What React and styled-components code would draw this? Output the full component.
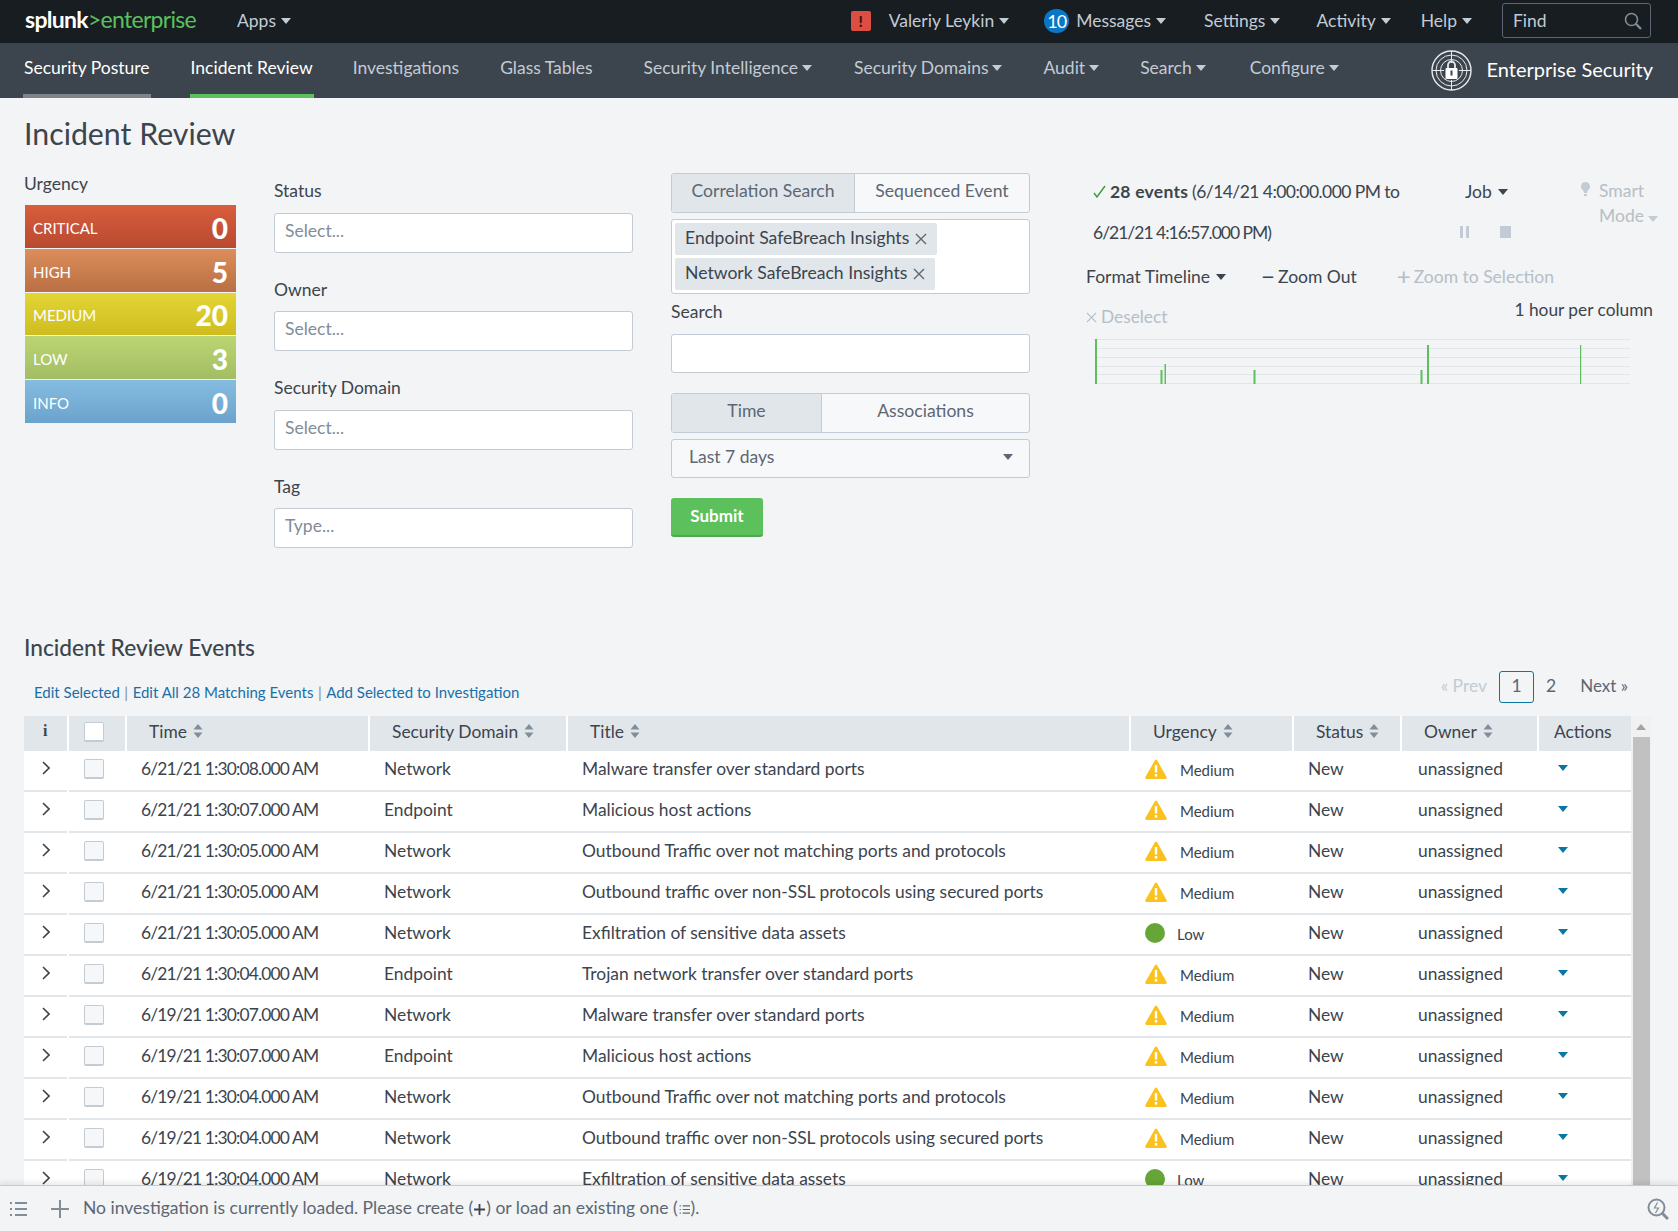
import React from "react";
import styled, { createGlobalStyle } from "styled-components";

const Global = createGlobalStyle`
  html, body { margin: 0; padding: 0; background: #f2f4f5; }
  body { font-family: Lato, "Open Sans", "Liberation Sans", sans-serif; color: #3c444d; }
  * { box-sizing: border-box; }
`;

const Shell = styled.div`
  width: 1678px; height: 1231px; display: flex; flex-direction: column; overflow: hidden; background: #f2f4f5;
`;
const TopBar = styled.header`
  flex: none; height: 43px; background: #171d21; display: flex; align-items: center; padding: 0 25px 2px; color: #c3cbd4; font-size: 17.5px;
`;
const Logo = styled.div`
  font-size: 23px; line-height: 1; letter-spacing: -0.7px; color: #5cc05c; width: 212px; margin-top: -3px; white-space: nowrap;
  b { color: #fff; font-weight: 700; }
`;
const TopItem = styled.span`
  display: inline-flex; align-items: center; gap: 5px; margin-left: ${p => p.$ml || 0}px; white-space: nowrap;
`;
const Spacer = styled.div`flex: 1;`;
const Caret = styled.i`
  display: inline-block; flex: none; width: 0; height: 0; margin-top: 1px;
  border-left: ${p => p.$s || 5}px solid transparent; border-right: ${p => p.$s || 5}px solid transparent;
  border-top: ${p => (p.$s || 5) + 1}px solid ${p => p.$c || "currentColor"};
`;
const AlertBox = styled.span`
  width: 20px; height: 20px; border-radius: 2px; background: #dc4e41; color: #3c1410; font-weight: 900; font-size: 15px;
  display: flex; align-items: center; justify-content: center; margin-right: 18px;
`;
const Badge = styled.span`
  width: 25px; height: 24px; border-radius: 12px; background: #0877c6; color: #fff; font-size: 18px;
  display: flex; align-items: center; justify-content: center; margin-right: 2px; letter-spacing: -1px;
`;
const FindBox = styled.div`
  width: 149px; height: 35px; margin-left: 30px; margin-right: 2px; border: 1px solid #5c6773; border-radius: 3px; display: flex; align-items: center;
  justify-content: space-between; padding: 0 8px 0 10px; color: #c3cbd4;
`;
const NavBar = styled.nav`
  flex: none; height: 55px; background: #3c444d; display: flex; padding-left: 23px; padding-right: 24px; font-size: 17.5px; color: #c3cbd4;
`;
const NavItem = styled.a`
  height: 55px; padding: 0 1px 3px; margin-right: ${p => p.$mr}px; display: flex; align-items: center; gap: 4px; white-space: nowrap;
  color: ${p => (p.$on ? "#fff" : "#c3cbd4")};
  border-bottom: 4px solid ${p => p.$line || "transparent"};
`;
const Brand = styled.div`
  margin-left: auto; display: flex; align-items: center; gap: 15px; color: #fff; font-size: 20px; padding-bottom: 1px; margin-right: 1px; white-space: nowrap;
`;
const BrandName = styled.span`margin-top: -3px;`;
const Main = styled.main`
  flex: 1; min-height: 0; overflow: hidden; padding: 0 24px;
`;
const PageTitle = styled.h1`
  margin: 0; padding-top: 16px; height: 75px; font-size: 30.3px; line-height: 38px; font-weight: 400; color: #3c444d;
`;
const Filters = styled.section`
  display: grid; grid-template-columns: 212px 359px 359px minmax(0, 1fr); column-gap: 38px; height: 377px;
`;
const UrgencyCol = styled.div``;
const UrgencyLabel = styled.div`
  font-size: 17.5px; line-height: 22px; margin-bottom: 10px;
`;
const Bars = styled.div`
  margin-left: 1px; display: flex; flex-direction: column; gap: 1px;
`;
const Bar = styled.div`
  height: 42.8px; padding: 3px 8px 0; display: flex; align-items: center; justify-content: space-between; color: #fff; font-size: 15px;
  background: linear-gradient(${p => p.$a}, ${p => p.$b});
  b { font-size: 28px; font-weight: 900; line-height: 1; }
`;
const FieldCol = styled.div`
  padding-top: 7px; display: flex; flex-direction: column; gap: 26px;
`;
const Field = styled.div``;
const Label = styled.div`
  font-size: 17.5px; line-height: 22px; margin-bottom: 10.5px; color: #3c444d;
`;
const Input = styled.div`
  height: ${p => p.$h || 40}px; background: #fff; border: 1px solid #c3cbd4; border-radius: 3px; padding: 0 10px; line-height: 34px; font-size: 17.5px; color: #818d99;
`;
const MiddleCol = styled.div`
  display: flex; flex-direction: column;
`;
const Tabs = styled.div`
  height: 40px; display: grid; grid-template-columns: ${p => p.$cols}; border: 1px solid #c3cbd4; border-radius: 3px; overflow: hidden; background: #f7f8fa;
`;
const Tab = styled.div`
  display: flex; align-items: center; justify-content: center; font-size: 17.6px; padding-bottom: 5px; color: #5c6773;
  background: ${p => (p.$on ? "#e1e6eb" : "transparent")};
  border-right: ${p => (p.$on ? "1px solid #c3cbd4" : "0")};
`;
const Multi = styled.div`
  margin-top: 6px; background: #fff; border: 1px solid #c3cbd4; border-radius: 3px; padding: 3px; display: flex; flex-direction: column; align-items: flex-start; gap: 3px;
`;
const Chip = styled.span`
  height: 32px; background: #e1e6eb; border-radius: 2px; padding: 0 10px 3px; display: inline-flex; align-items: center; gap: 6px; font-size: 17.6px; color: #3c444d;
  svg { margin-top: 3px; }
`;
const SearchLabel = styled(Label)`
  margin: 7px 0 11px;
`;
const SmallGap = styled.div`height: 20px; flex: none;`;
const Dropdown = styled.div`
  margin-top: 6px; height: 39px; background: #f7f8fa; border: 1px solid #c3cbd4; border-radius: 3px; display: flex; align-items: center; justify-content: space-between;
  padding: 0 16px 5px 17px; font-size: 17.5px; color: #5c6773;
`;
const Submit = styled.button`
  margin-top: 20px; width: 92px; height: 39px; border: 0; border-bottom: 2px solid #4ea94e; border-radius: 3px; background: #5cc05c; color: #fff; font: 700 17px Lato, sans-serif; padding: 0 0 3px;
`;
const RightCol = styled.div`
  margin-left: 19px; margin-top: -1px; min-width: 0;
`;
const JobGrid = styled.div`
  display: grid; grid-template-columns: 378px 117px minmax(0, 1fr); grid-template-rows: 40px 40px; font-size: 17.5px; align-items: center;
`;
const JobText = styled.div`
  padding: 0 0 ${p => p.$pb || 0}px 6px; white-space: nowrap; letter-spacing: ${p => p.$ls}px;
  b { font-weight: 700; letter-spacing: 0.25px; }
`;
const JobMenu = styled.div`
  display: flex; align-items: center; gap: 6px; padding-bottom: 2px;
`;
const SmartMode = styled.div`
  grid-column: 3; grid-row: 1 / span 2; align-self: start; padding-top: 6px; line-height: 25px; color: #b6bec7; position: relative; padding-left: 18px; white-space: nowrap;
  margin-left: -1px;
  svg { position: absolute; left: 0; top: 10px; }
`;
const JobIcons = styled.div`
  display: flex; align-items: center; gap: 31px; margin-left: -5px;
`;
const Pause = styled.span`
  width: 9px; height: 12px; border-left: 3px solid #c3cbd4; border-right: 3px solid #c3cbd4;
`;
const Stop = styled.span`
  width: 11px; height: 12px; background: #c3cbd4;
`;
const Tools = styled.div`
  margin-top: 12px; height: 24px; display: flex; align-items: center; font-size: 17.5px; white-space: nowrap;
`;
const Tool = styled.span`
  display: inline-flex; align-items: center; gap: 3px; margin-left: ${p => p.$ml || 0}px; color: ${p => (p.$off ? "#b6bec7" : "#3c444d")};
`;
const FormatTool = styled(Tool)`
  gap: 6px; margin-left: -1px;
`;
const Sym = styled.span`font-size: 24px; line-height: 20px; font-weight: 400;`;
const DeselectRow = styled.div`
  margin-top: 11px; height: 29px; padding-right: 1px; display: flex; justify-content: space-between; font-size: 17.3px; line-height: 22px;
`;
const Deselect = styled.span`
  display: inline-flex; align-items: center; gap: 4px; height: 22px; margin: 7px 0 0 -1px; color: #b6bec7;
`;
const Chart = styled.svg`
  display: block; margin: 11px 0 0 7px;
`;
const EventsTitle = styled.h2`
  margin: 83px 0 8px; font-size: 22.7px; line-height: 30px; font-weight: 500; color: #3c444d;
`;
const ActionRow = styled.div`
  height: 32px; margin-bottom: 13px; display: flex; justify-content: space-between;
`;
const Links = styled.div`
  padding: 11px 0 0 10px; font-size: 15px; line-height: 20px; color: #1a6fa8;
  span { color: #818d99; margin: 0 4.5px; }
`;
const Pager = styled.div`
  display: flex; align-items: center; font-size: 17.5px; margin-right: 26px; padding-bottom: 3px; color: #5c6773;
`;
const PrevLink = styled.span`color: #c3cbd4; margin-right: 12px;`;
const PageBox = styled.span`
  width: 35px; height: 32px; margin-bottom: -3px; padding-bottom: 3px; border: 1px solid #0877a6; border-radius: 3px; display: flex; align-items: center; justify-content: center; margin-right: 12px;
`;
const PageNum = styled.span`margin-right: 24px;`;
const NextLink = styled.span`font-size: 17px;`;
const TableWrap = styled.div`
  display: flex; align-items: flex-start;
`;
const Table = styled.div`
  width: 1607px; flex: none; background: #fff; font-size: 17.4px;
`;
const cols = "45px 58px 243px 198px 563px 163px 108px 137px 92px";
const HeadRow = styled.div`
  display: grid; grid-template-columns: ${cols}; height: 35px; background: #e1e6eb;
`;
const HeadCell = styled.div`
  display: flex; align-items: center; gap: 6px; padding-left: ${p => p.$pl || 22}px; border-right: 2px solid #fff; padding-bottom: 5px; color: #3c444d;
  &:last-child { border-right: 0; padding-left: 15px; }
`;
const HeadCheckCell = styled(HeadCell)`
  padding-bottom: 3px;
`;
const InfoI = styled.span`
  font: 700 16px "Liberation Serif", serif; margin-left: 0;
`;
const Row = styled.div`
  display: grid; grid-template-columns: ${cols}; height: 41px; align-items: stretch;
`;
const Cell = styled.div`
  border-bottom: 2px solid #e1e6eb; padding: 6px 0 0 ${p => p.$pl || 15}px; line-height: 24px; white-space: nowrap; color: #3c444d;
`;
const TimeCell = styled(Cell)`
  letter-spacing: -0.85px;
`;
const ExpandCell = styled(Cell)`
  margin-right: 2px; padding: 10px 0 0 18px; line-height: 14px;
`;
const Check = styled.span`
  display: block; width: 20px; height: 20px; background: ${p => p.$white ? "#fff" : "#f5f7f8"}; border: 1px solid #c3cbd4; border-bottom-width: 2px; border-radius: 2px; margin-top: ${p => p.$mt || 0}px;
`;
const CheckCell = styled(Cell)`
  padding: 2px 0 0 15px;
`;
const UrgencyCell = styled(Cell)`
  display: flex; align-items: flex-start; padding: 8px 0 0 14px;
`;
const UrgencyText = styled.span`
  font-size: 15px; line-height: 20px; margin: 1px 0 0 ${p => p.$ml}px;
`;
const Dot = styled.span`
  width: 20px; height: 20px; border-radius: 50%; background: #65a637;
`;
const ActionCell = styled(Cell)`
  display: flex; align-items: flex-start; padding: 13px 0 0 19px;
`;
const Track = styled.div`
  width: 20px; height: 500px; background: #f1f1f1; margin-top: 0; position: relative; padding: 21px 1px 0 2px;
`;
const TrackUp = styled.i`
  position: absolute; left: 5px; top: 8px; width: 0; height: 0; border-left: 5px solid transparent; border-right: 5px solid transparent; border-bottom: 6px solid #a3a3a3;
`;
const Thumb = styled.div`height: 479px; background: #c1c1c1;`;
const Footer = styled.footer`
  flex: none; height: 46px; background: #f2f4f5; border-top: 1px solid #c3cbd4; box-shadow: 0 -3px 5px rgba(0,0,0,0.08); position: relative; z-index: 2;
  display: flex; align-items: center; padding: 0 9px; font-size: 17.5px; color: #5c6773; white-space: nowrap;
`;
const FootText = styled.span`margin-left: 14px; margin-top: -2px;`;
const FootIcons = styled.span`display: flex; align-items: center; gap: 24px;`;
const FootEnd = styled.span`margin-left: auto; display: flex;`;

const ListIcon = ({ size = 18, c = "#818d99", sw = 2 }) => (
  <svg width={size} height={size} viewBox="0 0 18 18" stroke={c} strokeWidth={sw} fill="none">
    <path d="M1 3h2M6 3h12M1 9h2M6 9h12M1 15h2M6 15h12" />
  </svg>
);
const Chevron = () => (
  <svg width="8" height="14" viewBox="0 0 8 14" fill="none" stroke="#3c444d" strokeWidth="1.6">
    <path d="M1 1l6 6-6 6" />
  </svg>
);
const Sort = () => (
  <svg width="10" height="14" viewBox="0 0 10 14" fill="#818d99"><path d="M5 0l4.5 5.5h-9zM5 14l4.5-5.5h-9z" /></svg>
);
const Warn = () => (
  <svg width="22" height="20" viewBox="0 0 22 20">
    <path d="M11 .5a1.2 1.2 0 0 1 1 .6l9.6 17a1.2 1.2 0 0 1-1 1.8H1.4a1.2 1.2 0 0 1-1-1.8L10 1.1a1.2 1.2 0 0 1 1-.6z" fill="#fbc21e" />
    <rect x="9.8" y="6" width="2.4" height="7.5" fill="#fff" />
    <rect x="9.8" y="15" width="2.4" height="2.6" fill="#fff" />
  </svg>
);
const SearchIcon = ({ c = "#818d99" }) => (
  <svg width="18" height="18" viewBox="0 0 18 18" fill="none" stroke={c} strokeWidth="1.6">
    <circle cx="7.5" cy="7.5" r="6" /><path d="M12 12l5 5" strokeWidth="2.4" />
  </svg>
);
const LockLogo = () => (
  <svg width="41" height="41" viewBox="0 0 41 41" fill="none" stroke="#e8ebee">
    <circle cx="20.5" cy="20.5" r="19.5" strokeWidth="1.4" />
    <circle cx="20.5" cy="20.5" r="15.5" strokeWidth="1" />
    <circle cx="20.5" cy="20.5" r="11" strokeWidth="1" />
    <path d="M20.5 1v12M20.5 30v10M1 20.5h12M28 20.5h12" strokeWidth="1" />
    <path d="M17 18v-3a3.5 3.5 0 0 1 7 0v3" strokeWidth="1.8" />
    <rect x="14.5" y="18" width="12" height="11" rx="1" fill="#fff" stroke="none" />
    <rect x="19.5" y="20.5" width="2" height="5" fill="#3c444d" stroke="none" />
  </svg>
);
const Bulb = () => (
  <svg width="9" height="14" viewBox="0 0 9 14" fill="#c3cbd4"><path d="M4.5 0a4.5 4.5 0 0 1 2.2 8.4L6 11H3l-.7-2.6A4.5 4.5 0 0 1 4.5 0zM3 12h3v2H3z" /></svg>
);
const XMark = ({ size = 12, c = "#5c6773" }) => (
  <svg width={size} height={size} viewBox="0 0 12 12" stroke={c} strokeWidth="1.4" fill="none"><path d="M1 1l10 10M11 1L1 11" /></svg>
);
const Check2 = () => (
  <svg width="13" height="13" viewBox="0 0 13 13" stroke="#3c9a3c" strokeWidth="1.4" fill="none"><path d="M1 8l3 4 8-11" /></svg>
);
const Plus = () => (
  <svg width="18" height="18" viewBox="0 0 18 18" stroke="#818d99" strokeWidth="2" fill="none"><path d="M9 0v18M0 9h18" /></svg>
);
const InvestIcon = () => (
  <svg width="22" height="22" viewBox="0 0 22 22" fill="none" stroke="#818d99">
    <circle cx="9.5" cy="9.5" r="8" strokeWidth="2" />
    <path d="M15 15l6 6" strokeWidth="3" />
    <path d="M10.5 4.5L7.5 10h4l-3 5" strokeWidth="1.2" />
  </svg>
);
const InlinePlus = () => (
  <svg width="11" height="11" viewBox="0 0 11 11" stroke="#3c444d" strokeWidth="1.8" fill="none" style={{ verticalAlign: "-1px", margin: "0 1px" }}><path d="M5.5 0v11M0 5.5h11" /></svg>
);
const InlineList = () => (
  <svg width="11" height="11" viewBox="0 0 18 18" stroke="#5c6773" strokeWidth="2" fill="none" style={{ verticalAlign: "-1px", margin: "0 1px" }}><path d="M1 3h2M6 3h12M1 9h2M6 9h12M1 15h2M6 15h12" /></svg>
);

const navItems = [
  { t: "Security Posture", mr: 39, on: true, line: "#7d8388" },
  { t: "Incident Review", mr: 38, on: true, line: "#5cc05c" },
  { t: "Investigations", mr: 39 },
  { t: "Glass Tables", mr: 49 },
  { t: "Security Intelligence", caret: true, mr: 40 },
  { t: "Security Domains", caret: true, mr: 39 },
  { t: "Audit", caret: true, mr: 39 },
  { t: "Search", caret: true, mr: 42 },
  { t: "Configure", caret: true, mr: 0 },
];
const urgencies = [
  ["CRITICAL", "0", "#d85d3c", "#b84a31"],
  ["HIGH", "5", "#dc8e5b", "#b96f43"],
  ["MEDIUM", "20", "#e3d535", "#cfbd1f"],
  ["LOW", "3", "#bcd572", "#a3bd64"],
  ["INFO", "0", "#85bce0", "#6ba3cc"],
];
const M = "Medium", L = "Low";
const rows = [
  ["6/21/21 1:30:08.000 AM", "Network", "Malware transfer over standard ports", M],
  ["6/21/21 1:30:07.000 AM", "Endpoint", "Malicious host actions", M],
  ["6/21/21 1:30:05.000 AM", "Network", "Outbound Traffic over not matching ports and protocols", M],
  ["6/21/21 1:30:05.000 AM", "Network", "Outbound traffic over non-SSL protocols using secured ports", M],
  ["6/21/21 1:30:05.000 AM", "Network", "Exfiltration of sensitive data assets", L],
  ["6/21/21 1:30:04.000 AM", "Endpoint", "Trojan network transfer over standard ports", M],
  ["6/19/21 1:30:07.000 AM", "Network", "Malware transfer over standard ports", M],
  ["6/19/21 1:30:07.000 AM", "Endpoint", "Malicious host actions", M],
  ["6/19/21 1:30:04.000 AM", "Network", "Outbound Traffic over not matching ports and protocols", M],
  ["6/19/21 1:30:04.000 AM", "Network", "Outbound traffic over non-SSL protocols using secured ports", M],
  ["6/19/21 1:30:04.000 AM", "Network", "Exfiltration of sensitive data assets", L],
];
const heads = ["Time", "Security Domain", "Title", "Urgency", "Status", "Owner"];
const grid = [0, 9, 18, 27, 35, 44];
const bars = [
  [1095, 2, 0], [1160.5, 2, 31], [1164.5, 1.5, 25], [1253.5, 2, 31], [1420.5, 2, 31], [1427, 2, 6], [1580, 1.2, 6],
];

export default function App() {
  return (
    <Shell>
      <Global />
      <TopBar>
        <Logo><b>splunk</b>&gt;enterprise</Logo>
        <TopItem>Apps <Caret /></TopItem>
        <Spacer />
        <AlertBox>!</AlertBox>
        <TopItem>Valeriy Leykin <Caret /></TopItem>
        <TopItem $ml={35}><Badge>10</Badge>Messages <Caret /></TopItem>
        <TopItem $ml={38}>Settings <Caret /></TopItem>
        <TopItem $ml={36}>Activity <Caret /></TopItem>
        <TopItem $ml={30}>Help <Caret /></TopItem>
        <FindBox>Find <SearchIcon /></FindBox>
      </TopBar>
      <NavBar>
        {navItems.map(n => (
          <NavItem key={n.t} $mr={n.mr} $on={n.on} $line={n.line}>{n.t}{n.caret && <Caret />}</NavItem>
        ))}
        <Brand><LockLogo /><BrandName>Enterprise Security</BrandName></Brand>
      </NavBar>
      <Main>
        <PageTitle>Incident Review</PageTitle>
        <Filters>
          <UrgencyCol>
            <UrgencyLabel>Urgency</UrgencyLabel>
            <Bars>
              {urgencies.map(([t, n, a, b]) => (
                <Bar key={t} $a={a} $b={b}><span>{t}</span><b>{n}</b></Bar>
              ))}
            </Bars>
          </UrgencyCol>
          <FieldCol>
            <Field><Label>Status</Label><Input>Select...</Input></Field>
            <Field><Label>Owner</Label><Input>Select...</Input></Field>
            <Field><Label>Security Domain</Label><Input>Select...</Input></Field>
            <Field><Label>Tag</Label><Input>Type...</Input></Field>
          </FieldCol>
          <MiddleCol>
            <Tabs $cols="183px 1fr"><Tab $on>Correlation Search</Tab><Tab>Sequenced Event</Tab></Tabs>
            <Multi>
              <Chip>Endpoint SafeBreach Insights <XMark /></Chip>
              <Chip>Network SafeBreach Insights <XMark /></Chip>
            </Multi>
            <SearchLabel>Search</SearchLabel>
            <Input $h={39} />
            <SmallGap />
            <Tabs $cols="150px 1fr"><Tab $on>Time</Tab><Tab>Associations</Tab></Tabs>
            <Dropdown>Last 7 days <Caret $c="#5c6773" /></Dropdown>
            <Submit>Submit</Submit>
          </MiddleCol>
          <RightCol>
            <JobGrid>
              <JobText $ls={-0.55} $pb={2}><Check2 /> <b>28 events</b> (6/14/21 4:00:00.000 PM to</JobText>
              <JobMenu>Job <Caret /></JobMenu>
              <SmartMode><Bulb />Smart<br />Mode <Caret $c="#c3cbd4" /></SmartMode>
              <JobText $ls={-1}>6/21/21 4:16:57.000 PM)</JobText>
              <JobIcons><Pause /><Stop /></JobIcons>
            </JobGrid>
            <Tools>
              <FormatTool>Format Timeline <Caret /></FormatTool>
              <Tool $ml={35}><Sym>−</Sym>Zoom Out</Tool>
              <Tool $ml={40} $off><Sym>+</Sym>Zoom to Selection</Tool>
            </Tools>
            <DeselectRow>
              <Deselect><XMark size={11} c="#b6bec7" />Deselect</Deselect>
              <span>1 hour per column</span>
            </DeselectRow>
            <Chart width="536" height="45" viewBox="1094 0 536 45">
              {grid.map(y => <rect key={y} x="1094" y={y} width="536" height="1" fill="#e1e6eb" />)}
              {bars.map(([x, w, y]) => <rect key={x} x={x} y={y} width={w} height={45 - y} fill="#5cc05c" />)}
            </Chart>
          </RightCol>
        </Filters>
        <EventsTitle>Incident Review Events</EventsTitle>
        <ActionRow>
          <Links>Edit Selected<span>|</span>Edit All 28 Matching Events<span>|</span>Add Selected to Investigation</Links>
          <Pager>
            <PrevLink>« Prev</PrevLink>
            <PageBox>1</PageBox>
            <PageNum>2</PageNum>
            <NextLink>Next »</NextLink>
          </Pager>
        </ActionRow>
        <TableWrap>
          <Table>
            <HeadRow>
              <HeadCell $pl={19}><InfoI>i</InfoI></HeadCell>
              <HeadCheckCell $pl={15}><Check $white /></HeadCheckCell>
              {heads.map(h => <HeadCell key={h}>{h} <Sort /></HeadCell>)}
              <HeadCell>Actions</HeadCell>
            </HeadRow>
            {rows.map((r, i) => (
              <Row key={i}>
                <ExpandCell><Chevron /></ExpandCell>
                <CheckCell><Check $mt={6} /></CheckCell>
                <TimeCell $pl={14}>{r[0]}</TimeCell>
                <Cell $pl={14}>{r[1]}</Cell>
                <Cell $pl={14}>{r[2]}</Cell>
                {r[3] === M
                  ? <UrgencyCell><Warn /><UrgencyText $ml={13}>{r[3]}</UrgencyText></UrgencyCell>
                  : <UrgencyCell><Dot /><UrgencyText $ml={12}>{r[3]}</UrgencyText></UrgencyCell>}
                <Cell $pl={14}>New</Cell>
                <Cell $pl={16}>unassigned</Cell>
                <ActionCell><Caret $s={5} $c="#0877a6" /></ActionCell>
              </Row>
            ))}
          </Table>
          <Track><TrackUp /><Thumb /></Track>
        </TableWrap>
      </Main>
      <Footer>
        <FootIcons><ListIcon /><Plus /></FootIcons>
        <FootText>No investigation is currently loaded. Please create (<InlinePlus />) or load an existing one (<InlineList />).</FootText>
        <FootEnd><InvestIcon /></FootEnd>
      </Footer>
    </Shell>
  );
}
